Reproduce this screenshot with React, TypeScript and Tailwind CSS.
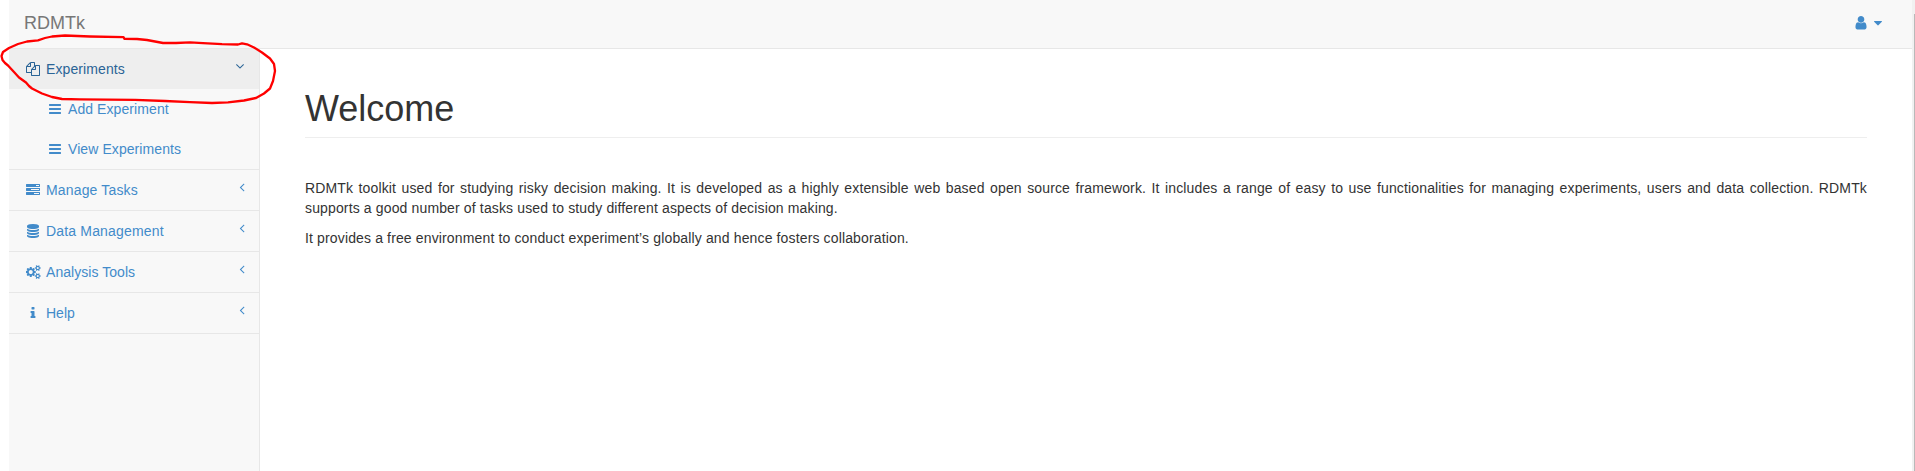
import React from "react";

type IconProps = { d: string; className?: string; viewBox?: string };

const Icon = ({ d, className = "h-3.5 w-3.5", viewBox = "0 0 1792 1792" }: IconProps) => (
  <svg viewBox={viewBox} className={`${className} shrink-0 fill-current`} aria-hidden="true">
    <path d={d} />
  </svg>
);

const FILES =
  "M1696 384q40 0 68 28t28 68v1216q0 40-28 68t-68 28h-960q-40 0-68-28t-28-68v-288h-544q-40 0-68-28t-28-68v-672q0-40 20-88t48-76l408-408q28-28 76-48t88-20h416q40 0 68 28t28 68v328q68-40 128-40h416zm-544 213l-299 299h299v-299zm-640-384l-299 299h299v-299zm196 647l316-316v-416h-384v416q0 40-28 68t-68 28h-416v640h512v-256q0-40 20-88t48-76zm956 804v-1152h-384v416q0 40-28 68t-68 28h-416v640h896z";
const TASKS =
  "M1024 1408h640v-128h-640v128zm-384-512h1024v-128h-1024v128zm640-512h384v-128h-384v128zm512 832v256q0 26-19 45t-45 19h-1664q-26 0-45-19t-19-45v-256q0-26 19-45t45-19h1664q26 0 45 19t19 45zm0-512v256q0 26-19 45t-45 19h-1664q-26 0-45-19t-19-45v-256q0-26 19-45t45-19h1664q26 0 45 19t19 45zm0-512v256q0 26-19 45t-45 19h-1664q-26 0-45-19t-19-45v-256q0-26 19-45t45-19h1664q26 0 45 19t19 45z";
const BARS =
  "M1664 1344v128q0 26-19 45t-45 19h-1408q-26 0-45-19t-19-45v-128q0-26 19-45t45-19h1408q26 0 45 19t19 45zm0-512v128q0 26-19 45t-45 19h-1408q-26 0-45-19t-19-45v-128q0-26 19-45t45-19h1408q26 0 45 19t19 45zm0-512v128q0 26-19 45t-45 19h-1408q-26 0-45-19t-19-45v-128q0-26 19-45t45-19h1408q26 0 45 19t19 45z";
const DATABASE =
  "M896 768q237 0 443-43t325-127v170q0 69-103 128t-280 93.5-385 34.5-385-34.5-280-93.5-103-128v-170q119 84 325 127t443 43zm0 768q237 0 443-43t325-127v170q0 69-103 128t-280 93.5-385 34.5-385-34.5-280-93.5-103-128v-170q119 84 325 127t443 43zm0-384q237 0 443-43t325-127v170q0 69-103 128t-280 93.5-385 34.5-385-34.5-280-93.5-103-128v-170q119 84 325 127t443 43zm0-1152q208 0 385 34.5t280 93.5 103 128v128q0 69-103 128t-280 93.5-385 34.5-385-34.5-280-93.5-103-128v-128q0-69 103-128t280-93.5 385-34.5z";
const SMALL_GEAR =
  "v140q0 16-149 31-12 27-30 52 51 113 51 138 0 4-4 7-122 71-124 71-8 0-46-47t-52-68q-20 2-30 2t-30-2q-14 21-52 68t-46 47q-2 0-124-71-4-3-4-7 0-25 51-138-18-25-30-52-149-15-149-31v-140q0-16 149-31 13-29 30-52-51-113-51-138 0-4 4-7 4-2 35-20t59-34 30-16q8 0 46 46.5t52 67.5q20-2 30-2t30 2q51-71 92-112l6-2q4 0 124 70 4 3 4 7 0 25-51 138 17 23 30 52 149 15 149 31z";
const COGS =
  "M832 896q0-106-75-181t-181-75-181 75-75 181 75 181 181 75 181-75 75-181zm768 512q0-52-38-90t-90-38-90 38-38 90q0 53 37.5 90.5t90.5 37.5 90.5-37.5 37.5-90.5zm0-1024q0-52-38-90t-90-38-90 38-38 90q0 53 37.5 90.5t90.5 37.5 90.5-37.5 37.5-90.5zm-384 421v185q0 10-7 19.5t-16 10.5l-155 24q-11 35-32 76 34 48 90 115 7 11 7 20 0 12-7 19-23 30-82.5 89.5t-78.5 59.5q-11 0-21-7l-115-90q-37 19-77 31-11 108-23 155-7 24-30 24h-186q-11 0-20-7.5t-10-17.5l-23-153q-34-10-75-31l-118 89q-7 7-20 7-11 0-21-8-144-133-144-160 0-9 7-19 10-14 41-53t47-61q-23-44-35-82l-152-24q-10-1-17-9.5t-7-19.5v-185q0-10 7-19.5t16-10.5l155-24q11-35 32-76-34-48-90-115-7-11-7-20 0-12 7-20 22-30 82-89t79-59q11 0 21 7l115 90q34-18 77-32 11-108 23-154 7-24 30-24h186q11 0 20 7.5t10 17.5l23 153q34 10 75 31l118-89q8-7 20-7 11 0 21 8 144 133 144 160 0 8-7 19-12 16-42 54t-45 60q23 48 34 82l152 23q10 2 17 10.5t7 19.5z" +
  "M1856 1338" + SMALL_GEAR +
  "M1856 314" + SMALL_GEAR;
const INFO =
  "M1216 1344v128q0 26-19 45t-45 19h-512q-26 0-45-19t-19-45v-128q0-26 19-45t45-19h64v-384h-64q-26 0-45-19t-19-45v-128q0-26 19-45t45-19h384q26 0 45 19t19 45v576h64q26 0 45 19t19 45zm-128-1152v192q0 26-19 45t-45 19h-256q-26 0-45-19t-19-45v-192q0-26 19-45t45-19h256q26 0 45 19t19 45z";
const USER =
  "M1536 1399q0 109-62.5 187t-150.5 78h-854q-88 0-150.5-78t-62.5-187q0-85 8.5-160.5t31.5-152 58.5-131 94-89 134.5-34.5q131 128 313 128t313-128q76 0 134.5 34.5t94 89 58.5 131 31.5 152 8.5 160.5zm-256-887q0 159-112.5 271.5t-271.5 112.5-271.5-112.5-112.5-271.5 112.5-271.5 271.5-112.5 271.5 112.5 112.5 271.5z";
const CARET =
  "M1408 704q0 26-19 45l-448 448q-19 19-45 19t-45-19l-448-448q-19-19-19-45t19-45 45-19h896q26 0 45 19t19 45z";
const ANGLE_LEFT =
  "M1203 544q0 13-10 23l-393 393 393 393q10 10 10 23t-10 23l-50 50q-10 10-23 10t-23-10l-466-466q-10-10-10-23t10-23l466-466q10-10 23-10t23 10l50 50q10 10 10 23z";
const ANGLE_DOWN =
  "M1395 736q0 13-10 23l-466 466q-10 10-23 10t-23-10l-466-466q-10-10-10-23t10-23l50-50q10-10 23-10t23 10l393 393 393-393q10-10 23-10t23 10l50 50q10 10 10 23z";

const sections = [
  { label: "Manage Tasks", icon: TASKS, tracking: "tracking-[0.16px]" },
  { label: "Data Management", icon: DATABASE, tracking: "tracking-[0.17px]" },
  { label: "Analysis Tools", icon: COGS, wide: true, tracking: "tracking-[0.05px]" },
  { label: "Help", icon: INFO, tracking: "tracking-normal" },
];

const Sidebar = () => (
  <nav className="w-[251px] shrink-0 border-r border-[#e7e7e7] bg-[#f8f8f8] text-[#428bca]">
    <a className="flex h-10 items-center bg-[#eeeeee] pl-[17px] pr-[12.5px] text-[#2a6496]">
      <Icon d={FILES} />
      <span className="ml-1.5 flex-1 tracking-[0.1px]">Experiments</span>
      <Icon d={ANGLE_DOWN} className="mb-1.5 h-3.5 w-3.5" />
    </a>
    <ul className="border-b border-[#e7e7e7]">
      {["Add Experiment", "View Experiments"].map((label) => (
        <li key={label} className="flex h-10 items-center pl-[39px]">
          <Icon d={BARS} />
          <span className="ml-1.5 tracking-[0.08px]">{label}</span>
        </li>
      ))}
    </ul>
    {sections.map(({ label, icon, wide, tracking }) => (
      <a key={label} className="flex h-[41px] items-center border-b border-[#e7e7e7] pl-4 pr-[10px]">
        <span className="flex w-4 justify-center">
          {wide ? (
            <Icon d={icon} viewBox="0 0 1856 1792" className="h-3.5 w-[15px]" />
          ) : (
            <Icon d={icon} />
          )}
        </span>
        <span className={`ml-[5px] flex-1 ${tracking}`}>{label}</span>
        <Icon d={ANGLE_LEFT} className="mb-1.5 h-3.5 w-3.5" />
      </a>
    ))}
  </nav>
);

export default function App() {
  return (
    <div
      className="relative flex h-[471px] overflow-hidden bg-white pl-[9px] text-sm leading-5 text-[#333333]"
      style={{ fontFamily: '"Liberation Sans", Arial, sans-serif' }}
    >
      <div className="flex min-w-0 flex-1 flex-col">
        <header className="flex h-[49px] shrink-0 items-center justify-between border-b border-[#e7e7e7] bg-[#f8f8f8] pl-[15px] pr-[27px]">
          <span className="pb-[3px] text-lg leading-5 text-[#777777]">RDMTk</span>
          <span className="flex items-center gap-0.5 pb-[3px] text-[#428bca]">
            <Icon d={USER} className="h-[15.5px] w-4" />
            <Icon d={CARET} />
          </span>
        </header>
        <div className="flex min-h-0 flex-1">
          <Sidebar />
          <main className="flex-1 pl-[45px] pr-[45px] pt-10">
            <h1 className="h-[49px] border-b border-[#eeeeee] text-4xl leading-[39px]">Welcome</h1>
            <p className="mt-10 text-justify tracking-[0.14px]">
              RDMTk toolkit used for studying risky decision making. It is developed as a highly
              extensible web based open source framework. It includes a range of easy to use
              functionalities for managing experiments, users and data collection. RDMTk
              {" "}supports a good number of tasks used to study different aspects of decision making.
            </p>
            <p className="mt-2.5 tracking-[0.14px]">
              It provides a free environment to conduct experiment’s globally and hence fosters
              collaboration.
            </p>
          </main>
        </div>
      </div>
      <div className="flex w-[3px] shrink-0 justify-end bg-[#f1f1f1] pt-3.5">
        <div className="w-px bg-[#b9b9b9]" />
      </div>
      <svg
        className="pointer-events-none absolute left-0 top-0 h-[110px] w-[290px]"
        viewBox="0 0 290 110"
        fill="none"
        stroke="#ff0000"
        strokeWidth="2.3"
        strokeLinejoin="round"
      >
        <path d="M123.5 37.2 L90 36.5 L65 35.5 L52 36.5 L45 38 L38 40.3 L27 41.5 L18 44 L9 48 L3 52 L1.5 56 L2.5 60 L5 63 L8 65.5 L14 72 L19 77.5 L26 82.5 L29 86 L32 88.5 L42 93.5 L52 97 L62 99 L80 99.3 L135 99.8 L165 101 L190 102.2 L212 103 L228 102.3 L244 100.5 L256 98 L264 93.5 L270 88.5 L273 81 L275 71 L274 64 L270 58.5 L262 52.5 L254 47.5 L247 44.3 L242 43.3 L238 44.5 L222 44.2 L203 43.2 L190 42.3 L176 43 L163 43 L155 41.5 L147 40 L137 39 L124.5 38.8 Z" />
      </svg>
    </div>
  );
}
